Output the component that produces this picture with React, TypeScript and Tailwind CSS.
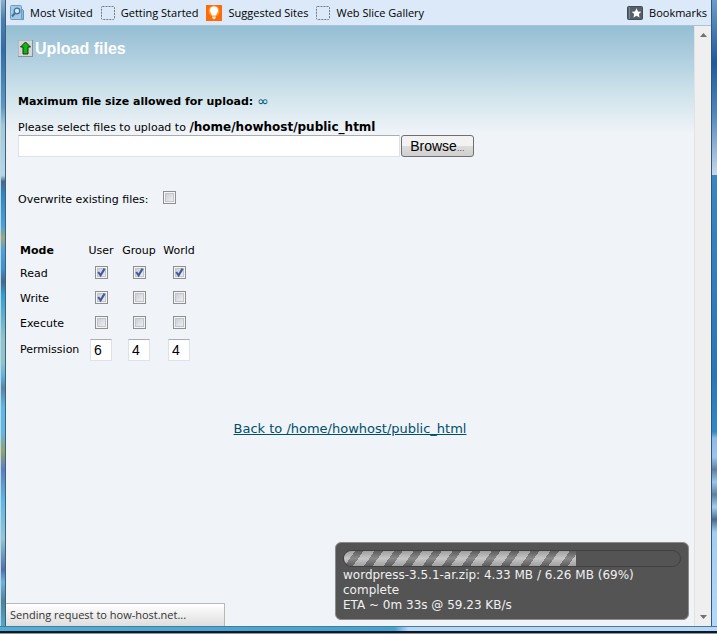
import { useState } from "react";

const MODES = ["Read", "Write", "Execute"];
const GROUPS = [
  { name: "User", width: "w-[38px]" },
  { name: "Group", width: "w-[38px]" },
  { name: "World", width: "w-[42px]" },
];
const BITS = [4, 2, 1];

function Checkbox({
  id,
  label,
  checked,
  onChange,
}: {
  id: string;
  label?: string;
  checked: boolean;
  onChange: () => void;
}) {
  return (
    <span className="relative inline-block size-[13px] align-top">
      <input
        type="checkbox"
        id={id}
        aria-label={label}
        checked={checked}
        onChange={onChange}
        className="block size-[13px] appearance-none border border-[#8e8f8f] bg-linear-to-br from-[#c3c7d0] to-[#f6f6f6] shadow-[inset_0_0_0_1px_#f4f4f4,inset_0_0_0_2px_#c0c4cb]"
      />
      {checked && (
        <svg
          viewBox="0 0 13 13"
          className="pointer-events-none absolute inset-0 size-[13px]"
        >
          <path
            d="M3.2 6 L5.6 9.4 L9.6 2.6"
            fill="none"
            stroke="#445a9c"
            strokeWidth="2.1"
          />
        </svg>
      )}
    </span>
  );
}

function DashedIcon() {
  return (
    <svg viewBox="0 0 14 14" className="size-[14px]">
      <rect
        x="0.5"
        y="0.5"
        width="13"
        height="13"
        rx="1"
        fill="none"
        stroke="#76797e"
        strokeDasharray="2 1"
      />
    </svg>
  );
}

function MostVisitedIcon() {
  return (
    <svg viewBox="0 0 14 16" className="h-4 w-[14px]">
      <path d="M3 4 H12 L13.5 5.5 V14.5 H3 Z" fill="#8db9dc" stroke="#5e93bf" />
      <rect x="0.5" y="0.5" width="11" height="14" rx="1" fill="#a5cae6" stroke="#6c9dc5" />
      <circle cx="7" cy="6" r="2.8" fill="#d5e9f6" stroke="#41709a" strokeWidth="1.3" />
      <path d="M5 8 L2 11.5" stroke="#41709a" strokeWidth="2" />
    </svg>
  );
}

function BulbIcon() {
  return (
    <svg viewBox="0 0 16 16" className="size-4">
      <rect width="16" height="16" fill="#ff6a08" />
      <circle cx="8" cy="6" r="5.5" fill="#ff9d3c" />
      <path
        d="M8 1.5 a4 4 0 0 1 4 4 c0 2-1.7 3-2 5 H6 C5.7 8.5 4 7.5 4 5.5 a4 4 0 0 1 4-4 Z"
        fill="#fff"
      />
      <path d="M6.2 11.5 H9.8 V13 L8 14.5 L6.2 13 Z" fill="#ffe9d2" />
    </svg>
  );
}

function BookmarksIcon() {
  return (
    <svg viewBox="0 0 16 14" className="h-[14px] w-4">
      <rect x="0.5" y="0.5" width="15" height="13" rx="1" fill="#56606a" stroke="#434c55" />
      <path d="M2.5 1 V13" stroke="#7b8792" />
      <path
        d="M9.5 2.2 L11 5.4 L14.3 5.8 L11.9 8.1 L12.5 11.5 L9.5 9.8 L6.5 11.5 L7.1 8.1 L4.7 5.8 L8 5.4 Z"
        fill="#fff"
      />
    </svg>
  );
}

function UploadIcon() {
  return (
    <svg viewBox="0 0 15 17" className="h-[17px] w-[15px]">
      <rect x="0.5" y="0.5" width="14" height="16" fill="#d3d6d8" stroke="#8d9194" />
      <path d="M0.5 16 V0.5 H14" fill="none" stroke="#b4b9bc" />
      <path
        d="M7.5 2 L12.5 7 H10 V14 H5 V7 H2.5 Z"
        fill="#12b40f"
        stroke="#0c3a10"
      />
    </svg>
  );
}

function BookmarkBar() {
  return (
    <nav className="flex h-[26px] items-center border-b border-[#a9c3da] bg-[#dbe9f8] px-1 pt-px font-['Open_Sans',sans-serif] text-[11px] whitespace-nowrap text-black">
      <div className="flex flex-1 items-center gap-2">
        <button className="flex items-center gap-1.5">
          <MostVisitedIcon />
          Most Visited
        </button>
        <button className="flex items-center gap-1.5">
          <DashedIcon />
          Getting Started
        </button>
        <button className="flex items-center gap-1.5">
          <BulbIcon />
          Suggested Sites
        </button>
        <button className="flex items-center gap-1.5">
          <DashedIcon />
          Web Slice Gallery
        </button>
      </div>
      <button className="flex items-center gap-1.5">
        <BookmarksIcon />
        Bookmarks
      </button>
    </nav>
  );
}

function PermissionTable() {
  // rows are modes, columns are groups
  const [perms, setPerms] = useState<boolean[][]>([
    [true, true, true],
    [true, false, false],
    [false, false, false],
  ]);

  const toggle = (row: number, col: number) =>
    setPerms(
      perms.map((r, i) =>
        r.map((v, j) => (i === row && j === col ? !v : v))
      )
    );

  const octal = (col: number) =>
    perms.reduce((sum, r, i) => sum + (r[col] ? BITS[i] : 0), 0);

  return (
    <table className="mt-8 ml-0.5 border-collapse text-center">
      <thead>
        <tr className="h-[22px]">
          <th className="w-[62px] text-left font-bold">Mode</th>
          {GROUPS.map((g) => (
            <th key={g.name} className={`font-normal ${g.width}`}>
              {g.name}
            </th>
          ))}
        </tr>
      </thead>
      <tbody>
        {MODES.map((mode, row) => (
          <tr key={mode} className="h-[25px]">
            <td className="text-left">{mode}</td>
            {GROUPS.map((g, col) => (
              <td key={g.name}>
                <Checkbox
                  id={`${mode}-${g.name}`}
                  label={`${mode} ${g.name}`}
                  checked={perms[row][col]}
                  onChange={() => toggle(row, col)}
                />
              </td>
            ))}
          </tr>
        ))}
        <tr className="h-[26px]">
          <td className="text-left">Permission</td>
          {GROUPS.map((g, col) => (
            <td key={g.name}>
              <input
                type="text"
                aria-label={`${g.name} permission`}
                readOnly
                value={octal(col)}
                className="mx-auto block size-[22px] border border-[#dde1ea] border-t-[#abadb3] bg-white pl-[3px] font-['Liberation_Sans',sans-serif] text-[14px] text-black"
              />
            </td>
          ))}
        </tr>
      </tbody>
    </table>
  );
}

function UploadProgress({ percent }: { percent: number }) {
  return (
    <div className="absolute right-[5px] bottom-1.5 w-[354px] rounded-md border border-[#8b8b8b] bg-[#545454] px-[7px] pt-[7px] pb-1.5 text-[12px] leading-[15px] text-[#f0f0f0]">
      <div
        role="progressbar"
        aria-label="Upload progress"
        aria-valuenow={percent}
        className="h-[17px] overflow-hidden rounded-full border border-[#404040]"
      >
        <div
          className="h-full bg-[linear-gradient(to_bottom,#0002,#fff3,#0002),repeating-linear-gradient(125deg,#b8b8b8_0px,#b8b8b8_9px,#6c6c6c_9px,#6c6c6c_16px)]"
          style={{ width: `${percent}%` }}
        />
      </div>
      <p className="pt-px">
        wordpress-3.5.1-ar.zip: 4.33 MB / 6.26 MB (69%)
        <br />
        complete
        <br />
        ETA ~ 0m 33s @ 59.23 KB/s
      </p>
    </div>
  );
}

function Scrollbar() {
  return (
    <div className="flex w-[17px] flex-col items-center justify-between border-l border-[#e2e2e2] bg-[#efefef] py-[7px]">
      <svg viewBox="0 0 7 4" className="h-1 w-[7px]">
        <path d="M0 4 L3.5 0 L7 4 Z" fill="#707070" />
      </svg>
      <svg viewBox="0 0 7 4" className="h-1 w-[7px]">
        <path d="M0 0 L3.5 4 L7 0 Z" fill="#707070" />
      </svg>
    </div>
  );
}

export default function App() {
  const [overwrite, setOverwrite] = useState(false);

  return (
    <div className="flex h-screen flex-col bg-[#101820]">
      <div className="flex min-h-0 flex-1">
        <div className="w-1.5 border-r border-l border-l-[#b9d6ea] border-r-[#3f6078] bg-[linear-gradient(to_bottom,#8fb0cc_0%,#4d7fae_3%,#2f6dab_8%,#5f97c2_17%,#a4c8d4_20%,#b9d6e6_28%,#46688a_29%,#2f86c0_31%,#4aa0dc_36%,#a0a878_38%,#4f9fda_40%,#3f90cc_43%,#46688a_45%,#2f9fd0_47%,#8fc4c8_54%,#8fc4c8_58%,#5fb4dc_60%,#5585a5_62%,#5fb8e4_65%,#62b8e4_69%,#96a468_72%,#5a80bc_75%,#5fb8e4_80%,#92c6d6_86%,#5070a8_91%,#6fb4dc_93%,#4f8098_96%,#50a8cc_100%)]" />
        <div className="flex min-w-0 flex-1 flex-col">
          <BookmarkBar />
          <div className="relative flex min-h-0 flex-1">
            <main className="relative min-w-0 flex-1 bg-[#f0f4f8] bg-[linear-gradient(to_bottom,#95bed3_0px,#b3d1e0_36px,#cbe1ea_64px,#f0f4f8_108px)] px-3 pt-3.5 font-['DejaVu_Sans',sans-serif] text-[11px] text-black">
              <h1 className="flex items-center gap-0.5 font-['Liberation_Sans',sans-serif] text-[16px] leading-4 font-bold text-white">
                <UploadIcon />
                Upload files
              </h1>
              <p className="mt-[37px] flex items-center gap-1 leading-[15px] font-bold">
                Maximum file size allowed for upload:
                <span className="text-[14px] font-normal text-[#00597a]">∞</span>
              </p>
              <label htmlFor="file" className="mt-[11px] block leading-[15px]">
                Please select files to upload to{" "}
                <b className="text-[12px]">/home/howhost/public_html</b>
              </label>
              <div className="flex gap-px">
                <input
                  type="text"
                  id="file"
                  className="h-[22px] w-[382px] border border-[#dde1ea] border-t-[#abadb3] bg-white px-1"
                />
                <button className="h-[22px] w-[73px] rounded-[3px] border border-[#707070] bg-linear-to-b from-[#f2f2f2] from-50% via-[#dddddd] via-50% to-[#cfcfcf] font-['Liberation_Sans',sans-serif] text-[14px] leading-5">
                  Browse<span className="text-[8px]">…</span>
                </button>
              </div>
              <div className="mt-[34px] flex items-start gap-3.5">
                <label htmlFor="overwrite" className="pt-px leading-4">
                  Overwrite existing files:
                </label>
                <Checkbox
                  id="overwrite"
                  checked={overwrite}
                  onChange={() => setOverwrite(!overwrite)}
                />
              </div>
              <PermissionTable />
              <p className="mt-14 text-center text-[13px] leading-5">
                <a href="#" className="text-[#004f6b] underline">
                  Back to /home/howhost/public_html
                </a>
              </p>
              <UploadProgress percent={69} />
            </main>
            <Scrollbar />
            <div className="absolute bottom-0 left-0 h-[23px] w-[219px] border-t border-r border-[#b8b8b8] bg-linear-to-b from-white to-[#dedede] pl-1 font-['Open_Sans',sans-serif] text-[11px] leading-[22px] text-[#333]">
              Sending request to how-host.net...
            </div>
          </div>
        </div>
        <div className="w-1.5 border-l border-[#2a5a85] bg-[linear-gradient(to_bottom,#6e9cc8_0%,#1f5a9c_10%,#4f86bb_18%,#c8d8ea_28%,#3a86c0_28%,#2878b8_60%,#3288c8_69%,#8fb8e6_70%,#9cc4ee_73%,#5f7f9f_75%,#9cc4ee_77%,#5f7f9f_79%,#a4ccf2_81%,#4a6a8a_83%,#a4ccf2_85%,#b5d8fa_100%)]" />
      </div>
      <div className="h-[5px] border-t border-[#4d7a94] bg-[linear-gradient(to_right,#50aed6_0%,#43a3d4_55%,#b5d8fa_57%,#b5d8fa_100%)]" />
      <div className="h-[3px] border-b border-[#8a98a6]" />
    </div>
  );
}
